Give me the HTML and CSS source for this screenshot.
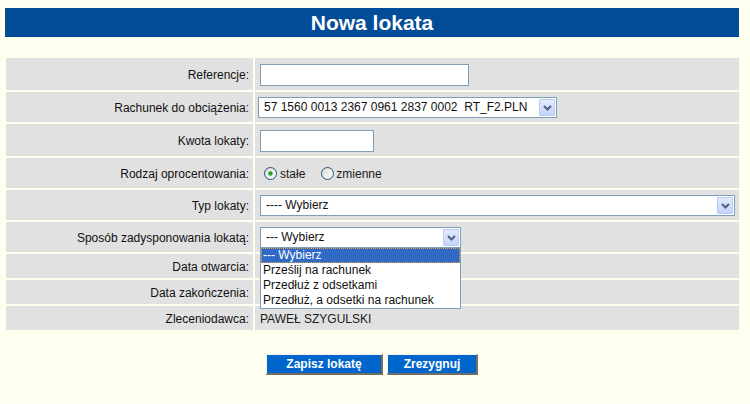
FILE: index.html
```html
<!DOCTYPE html>
<html lang="pl">
<head>
<meta charset="utf-8">
<title>Nowa lokata</title>
<link rel="stylesheet" href="styles.css">
</head>
<body>
<h1 class="title">Nowa lokata</h1>
<table class="form">
  <colgroup><col class="c-label"><col class="c-value"></colgroup>
  <tr class="h32">
    <th>Referencje:</th>
    <td><input class="field w-ref" type="text"></td>
  </tr>
  <tr class="h30">
    <th>Rachunek do obciążenia:</th>
    <td>
      <div class="select w-acc shift">
        <span class="val">57 1560 0013 2367 0961 2837 0002&nbsp; RT_F2.PLN</span>
        <span class="btn"><svg width="9" height="6" viewBox="0 0 9 6"><path d="M1 1 L4.5 4.5 L8 1" fill="none" stroke="#4d6185" stroke-width="2"/></svg></span>
      </div>
    </td>
  </tr>
  <tr class="h32">
    <th>Kwota lokaty:</th>
    <td><input class="field w-amt" type="text"></td>
  </tr>
  <tr class="h30">
    <th>Rodzaj oprocentowania:</th>
    <td>
      <div class="radios">
        <span class="radio r1"><svg width="13" height="13" viewBox="0 0 13 13"><defs><linearGradient id="rg" x1="0" y1="0" x2="1" y2="1"><stop offset="0" stop-color="#dcdcd6"/><stop offset="1" stop-color="#ffffff"/></linearGradient></defs><circle cx="6.5" cy="6.5" r="6" fill="url(#rg)" stroke="#1c5180"/><circle cx="6.5" cy="6.5" r="2.2" fill="#21a121"/></svg>stałe</span>
        <span class="radio r2"><svg width="13" height="13" viewBox="0 0 13 13"><circle cx="6.5" cy="6.5" r="6" fill="url(#rg)" stroke="#1c5180"/></svg>zmienne</span>
      </div>
    </td>
  </tr>
  <tr class="h30">
    <th>Typ lokaty:</th>
    <td>
      <div class="select w-typ">
        <span class="val">---- Wybierz</span>
        <span class="btn"><svg width="9" height="6" viewBox="0 0 9 6"><path d="M1 1 L4.5 4.5 L8 1" fill="none" stroke="#4d6185" stroke-width="2"/></svg></span>
      </div>
    </td>
  </tr>
  <tr class="h30">
    <th>Sposób zadysponowania lokatą:</th>
    <td>
      <div class="select w-spo open">
        <span class="val">--- Wybierz</span>
        <span class="btn"><svg width="9" height="6" viewBox="0 0 9 6"><path d="M1 1 L4.5 4.5 L8 1" fill="none" stroke="#4d6185" stroke-width="2"/></svg></span>
        <ul class="dropdown">
          <li class="sel">--- Wybierz</li>
          <li>Prześlij na rachunek</li>
          <li>Przedłuż z odsetkami</li>
          <li>Przedłuż, a odsetki na rachunek</li>
        </ul>
      </div>
    </td>
  </tr>
  <tr class="h24">
    <th>Data otwarcia:</th>
    <td></td>
  </tr>
  <tr class="h24">
    <th>Data zakończenia:</th>
    <td></td>
  </tr>
  <tr class="h24">
    <th>Zleceniodawca:</th>
    <td>PAWEŁ SZYGULSKI</td>
  </tr>
</table>
<div class="actions">
  <button class="button b-save" type="button">Zapisz lokatę</button>
  <button class="button b-cancel" type="button">Zrezygnuj</button>
</div>
</body>
</html>
```

FILE: styles.css
```css
html, body {
  margin: 0;
  padding: 0;
}
body {
  background: #fffff0;
  font-family: "Liberation Sans", Arial, sans-serif;
  font-size: 12px;
  color: #111;
}
.title {
  margin: 8px 11px 0 5px;
  height: 29px;
  background: #034c97;
  color: #fff;
  font-size: 21px;
  font-weight: bold;
  line-height: 29px;
  text-align: center;
}
.form {
  margin: 19px 0 0 4px;
  width: 735px;
  table-layout: fixed;
  border-collapse: separate;
  border-spacing: 2px;
}
.c-label { width: 247px; }
.c-value { width: 484px; }
.form th,
.form td {
  box-sizing: border-box;
  background: #e1e1e1;
  padding: 1px 0 0 0;
  vertical-align: middle;
  line-height: 14px;
  overflow: visible;
}
.form th {
  padding-right: 4px;
  text-align: right;
  font-weight: normal;
  color: #111;
  white-space: nowrap;
}
.form td {
  padding-left: 5px;
  color: #1a1a1a;
}
.h32 { height: 32px; }
.h30 { height: 30px; }
.h24 { height: 24px; }

.field {
  display: block;
  box-sizing: border-box;
  height: 22px;
  margin: 0;
  padding: 0 3px;
  border: 1px solid #7f9db9;
  background: #fff;
  font: inherit;
}
.w-ref { width: 209px; }
.w-amt { width: 114px; }

.select {
  position: relative;
  box-sizing: border-box;
  display: flex;
  align-items: stretch;
  height: 21px;
  border: 1px solid #7f9db9;
  background: #fff;
  padding: 1px;
}
.select .val {
  flex: 1;
  padding-left: 4px;
  line-height: 17px;
  white-space: nowrap;
  overflow: hidden;
  color: #111;
}
.select .btn {
  box-sizing: border-box;
  width: 16px;
  display: flex;
  align-items: center;
  justify-content: center;
  background: linear-gradient(#e3ebfd, #c3d4fb);
  border: 1px solid #b8cbf4;
  border-radius: 1px;
}
.w-acc { width: 299px; }
.shift { margin-left: -2px; }
.w-typ { width: 475px; }
.w-spo { width: 201px; }

.dropdown {
  position: absolute;
  top: 100%;
  left: -1px;
  width: 201px;
  box-sizing: border-box;
  margin: 0;
  padding: 0;
  list-style: none;
  background: #fff;
  border: 1px solid #7f9db9;
  z-index: 2;
}
.dropdown li {
  height: 15px;
  line-height: 15px;
  padding-left: 2px;
  color: #111;
  white-space: nowrap;
}
.dropdown li.sel {
  background: #316ac5;
  color: #fff;
  outline: 1px dotted #e8a33a;
  outline-offset: -1px;
}

.radios {
  display: flex;
  align-items: center;
  padding-left: 4px;
}
.radio {
  display: inline-flex;
  align-items: center;
}
.radio svg {
  display: block;
}
.r1 svg { margin-right: 3px; }
.r2 { margin-left: 16px; }
.r2 svg { margin-right: 2px; }

.actions {
  display: flex;
  justify-content: center;
  gap: 4px;
  margin: 22px 11px 0 5px;
}
.button {
  box-sizing: border-box;
  height: 21px;
  margin: 0;
  padding: 0;
  background: #0066cc;
  color: #fff;
  font-family: "Liberation Sans", Arial, sans-serif;
  font-size: 12px;
  font-weight: bold;
  border-style: solid;
  border-width: 1px 2px 2px 1px;
  border-color: #f4f4ee #716f64 #716f64 #f4f4ee;
}
.b-save { width: 117px; }
.b-cancel { width: 91px; }
```
